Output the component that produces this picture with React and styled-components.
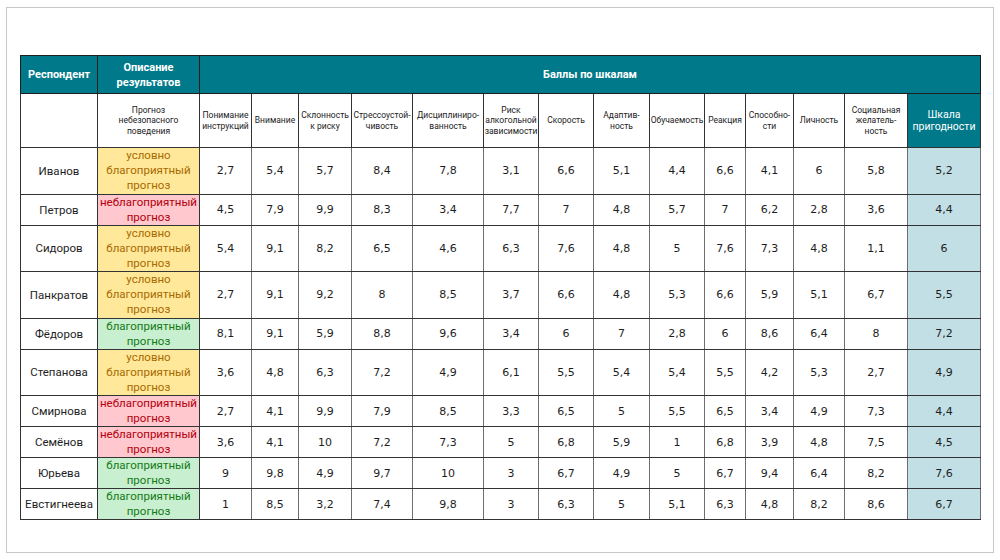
import React from 'react';
import styled, { createGlobalStyle } from 'styled-components';

const GlobalStyle = createGlobalStyle`
body{
  margin:0;
  background:#ffffff;
  font-family:Roboto, "Noto Sans", sans-serif;
}
`;

const Frame = styled.div`
box-sizing:border-box;
width:988px;
height:546px;
margin:7px 0 0 6px;
padding:47px 13px 0 13px;
border:1px solid #c8c8c8;
background:#ffffff;
`;

const Table = styled.table`
width:960px;
table-layout:fixed;
border-collapse:collapse;
border:1px solid #1e1e1e;
`;

const HeadCell = styled.th`
background:#00798a;
color:#ffffff;
font-family:Roboto, sans-serif;
font-weight:700;
font-size:11px;
line-height:15px;
text-align:center;
vertical-align:middle;
padding:0;
border:1px solid #1e1e1e;
`;

const SubCell = styled.td`
background:${({ $accent }) => ($accent ? '#00798a' : '#ffffff')};
color:${({ $accent }) => ($accent ? '#ffffff' : '#222222')};
font-family:Roboto, sans-serif;
font-size:${({ $accent }) => ($accent ? '10.5px' : '8.5px')};
line-height:${({ $accent }) => ($accent ? '12px' : '10.5px')};
white-space:pre-line;
text-align:center;
vertical-align:middle;
padding:0;
border:1px solid #333333;
overflow:hidden;
`;

const Row = styled.tr`
height:${({ $tall }) => ($tall ? '46.5px' : '31px')};
`;

const NameCell = styled.td`
font-family:Roboto, sans-serif;
font-size:11.5px;
color:#1e1e1e;
text-align:center;
vertical-align:middle;
padding:0;
border:1px solid #333333;
`;

const tones = {
  y: { bg: '#ffe89a', fg: '#a86a00' },
  r: { bg: '#ffc7ce', fg: '#b4000c' },
  g: { bg: '#c8efcf', fg: '#157a15' },
};

const DescCell = styled.td`
background:${({ $tone }) => tones[$tone].bg};
color:${({ $tone }) => tones[$tone].fg};
font-family:Roboto, sans-serif;
font-size:11.5px;
line-height:15px;
text-align:center;
vertical-align:middle;
padding:0;
border:1px solid #333333;
`;

const ValueCell = styled.td`
background:${({ $accent }) => ($accent ? '#c2dfe5' : '#ffffff')};
font-family:"DejaVu Sans", Verdana, sans-serif;
font-size:11px;
color:#1e1e1e;
text-align:center;
vertical-align:middle;
padding:0;
border-top:1px solid #333333;
border-bottom:1px solid #333333;
border-left:1px solid #6e6e6e;
border-right:1px solid #6e6e6e;
`;

const widths = [77, 102, 52, 47, 53, 61, 71, 55, 55, 56, 55, 41, 48, 51, 63, 73];

const scales = [
  'Понимание\nинструкций',
  'Внимание',
  'Склонность\nк риску',
  'Стрессоустой-\nчивость',
  'Дисциплиниро-\nванность',
  'Риск\nалкогольной\nзависимости',
  'Скорость',
  'Адаптив-\nность',
  'Обучаемость',
  'Реакция',
  'Способно-\nсти',
  'Личность',
  'Социальная\nжелатель-\nность',
];

const forecast = {
  y: ['условно', 'благоприятный', 'прогноз'],
  r: ['неблагоприятный', 'прогноз'],
  g: ['благоприятный', 'прогноз'],
};

const people = [
  ['Иванов', 'y', '2,7 5,4 5,7 8,4 7,8 3,1 6,6 5,1 4,4 6,6 4,1 6 5,8', '5,2'],
  ['Петров', 'r', '4,5 7,9 9,9 8,3 3,4 7,7 7 4,8 5,7 7 6,2 2,8 3,6', '4,4'],
  ['Сидоров', 'y', '5,4 9,1 8,2 6,5 4,6 6,3 7,6 4,8 5 7,6 7,3 4,8 1,1', '6'],
  ['Панкратов', 'y', '2,7 9,1 9,2 8 8,5 3,7 6,6 4,8 5,3 6,6 5,9 5,1 6,7', '5,5'],
  ['Фёдоров', 'g', '8,1 9,1 5,9 8,8 9,6 3,4 6 7 2,8 6 8,6 6,4 8', '7,2'],
  ['Степанова', 'y', '3,6 4,8 6,3 7,2 4,9 6,1 5,5 5,4 5,4 5,5 4,2 5,3 2,7', '4,9'],
  ['Смирнова', 'r', '2,7 4,1 9,9 7,9 8,5 3,3 6,5 5 5,5 6,5 3,4 4,9 7,3', '4,4'],
  ['Семёнов', 'r', '3,6 4,1 10 7,2 7,3 5 6,8 5,9 1 6,8 3,9 4,8 7,5', '4,5'],
  ['Юрьева', 'g', '9 9,8 4,9 9,7 10 3 6,7 4,9 5 6,7 9,4 6,4 8,2', '7,6'],
  ['Евстигнеева', 'g', '1 8,5 3,2 7,4 9,8 3 6,3 5 5,1 6,3 4,8 8,2 8,6', '6,7'],
];

export default function App() {
  return (
    <>
      <GlobalStyle />
      <Frame>
        <Table>
          <colgroup>
            {widths.map((w, i) => (
              <col key={i} style={{ width: w }} />
            ))}
          </colgroup>
          <thead>
            <tr style={{ height: 38 }}>
              <HeadCell>Респондент</HeadCell>
              <HeadCell>Описание<br />результатов</HeadCell>
              <HeadCell colSpan={14}>Баллы по шкалам</HeadCell>
            </tr>
            <tr style={{ height: 54 }}>
              <SubCell />
              <SubCell>{'Прогноз\nнебезопасного\nповедения'}</SubCell>
              {scales.map((s) => (
                <SubCell key={s}>{s}</SubCell>
              ))}
              <SubCell $accent>{'Шкала\nпригодности'}</SubCell>
            </tr>
          </thead>
          <tbody>
            {people.map(([name, tone, values, total]) => (
              <Row key={name} $tall={tone === 'y'}>
                <NameCell>{name}</NameCell>
                <DescCell $tone={tone}>
                  {forecast[tone].map((line, i) => (
                    <React.Fragment key={i}>
                      {i > 0 && <br />}
                      {line}
                    </React.Fragment>
                  ))}
                </DescCell>
                {values.split(' ').map((v, i) => (
                  <ValueCell key={i}>{v}</ValueCell>
                ))}
                <ValueCell $accent>{total}</ValueCell>
              </Row>
            ))}
          </tbody>
        </Table>
      </Frame>
    </>
  );
}
